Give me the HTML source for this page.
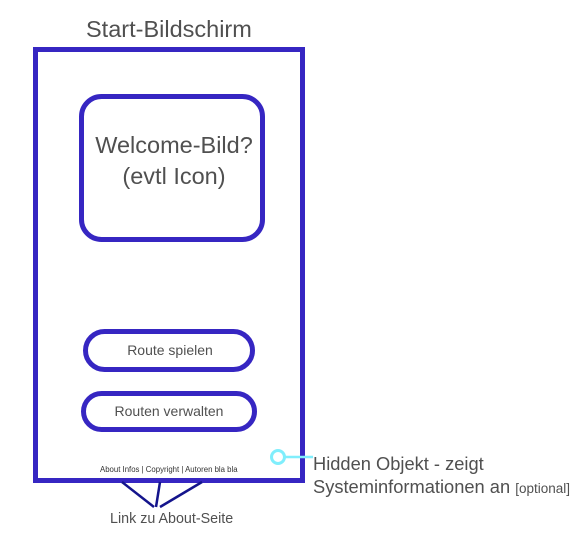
<!DOCTYPE html>
<html><head><meta charset="utf-8"><style>
body{margin:0;width:585px;height:544px;background:#fff;position:relative;overflow:hidden;font-family:"Liberation Sans",Arial,sans-serif;color:#505050}
.t{position:absolute;white-space:nowrap}
</style></head><body>
<svg width="585" height="544" style="position:absolute;left:0;top:0">
<rect x="35.5" y="49.5" width="267" height="431" fill="none" stroke="#3626c2" stroke-width="5"/>
<rect x="81.5" y="96.5" width="181" height="143" rx="20" fill="none" stroke="#3626c2" stroke-width="5"/>
<rect x="85.5" y="331.5" width="167" height="38" rx="19" fill="none" stroke="#3626c2" stroke-width="5"/>
<rect x="83.5" y="393.5" width="171" height="36" rx="18" fill="none" stroke="#3626c2" stroke-width="5"/>
<g stroke="#14148c" stroke-width="2.5">
<line x1="122" y1="482" x2="154" y2="507"/>
<line x1="160" y1="482" x2="156" y2="507"/>
<line x1="202" y1="482" x2="160" y2="507"/>
</g>
<circle cx="278" cy="457" r="6.5" fill="none" stroke="#80eefc" stroke-width="3"/>
<line x1="284" y1="457" x2="313" y2="457" stroke="#80eefc" stroke-width="2.5"/>
</svg>
<div class="t" style="left:86px;top:16px;font-size:23.5px">Start-Bildschirm</div>
<div class="t" style="left:81px;width:186px;top:130px;font-size:23.5px;text-align:center;line-height:31px">Welcome-Bild?<br>(evtl Icon)</div>
<div class="t" style="left:83px;width:174px;top:342px;font-size:14px;text-align:center">Route spielen</div>
<div class="t" style="left:81px;width:176px;top:403px;font-size:14px;text-align:center">Routen verwalten</div>
<div class="t" style="left:100px;top:465px;font-size:7.8px;color:#333">About Infos | Copyright | Autoren bla bla</div>
<div class="t" style="left:110px;top:511px;font-size:14.3px">Link zu About-Seite</div>
<div class="t" style="left:313px;top:452px;font-size:18.3px;line-height:23px">Hidden Objekt - zeigt<br>Systeminformationen an <span style="font-size:13.5px">[optional]</span></div>
</body></html>
